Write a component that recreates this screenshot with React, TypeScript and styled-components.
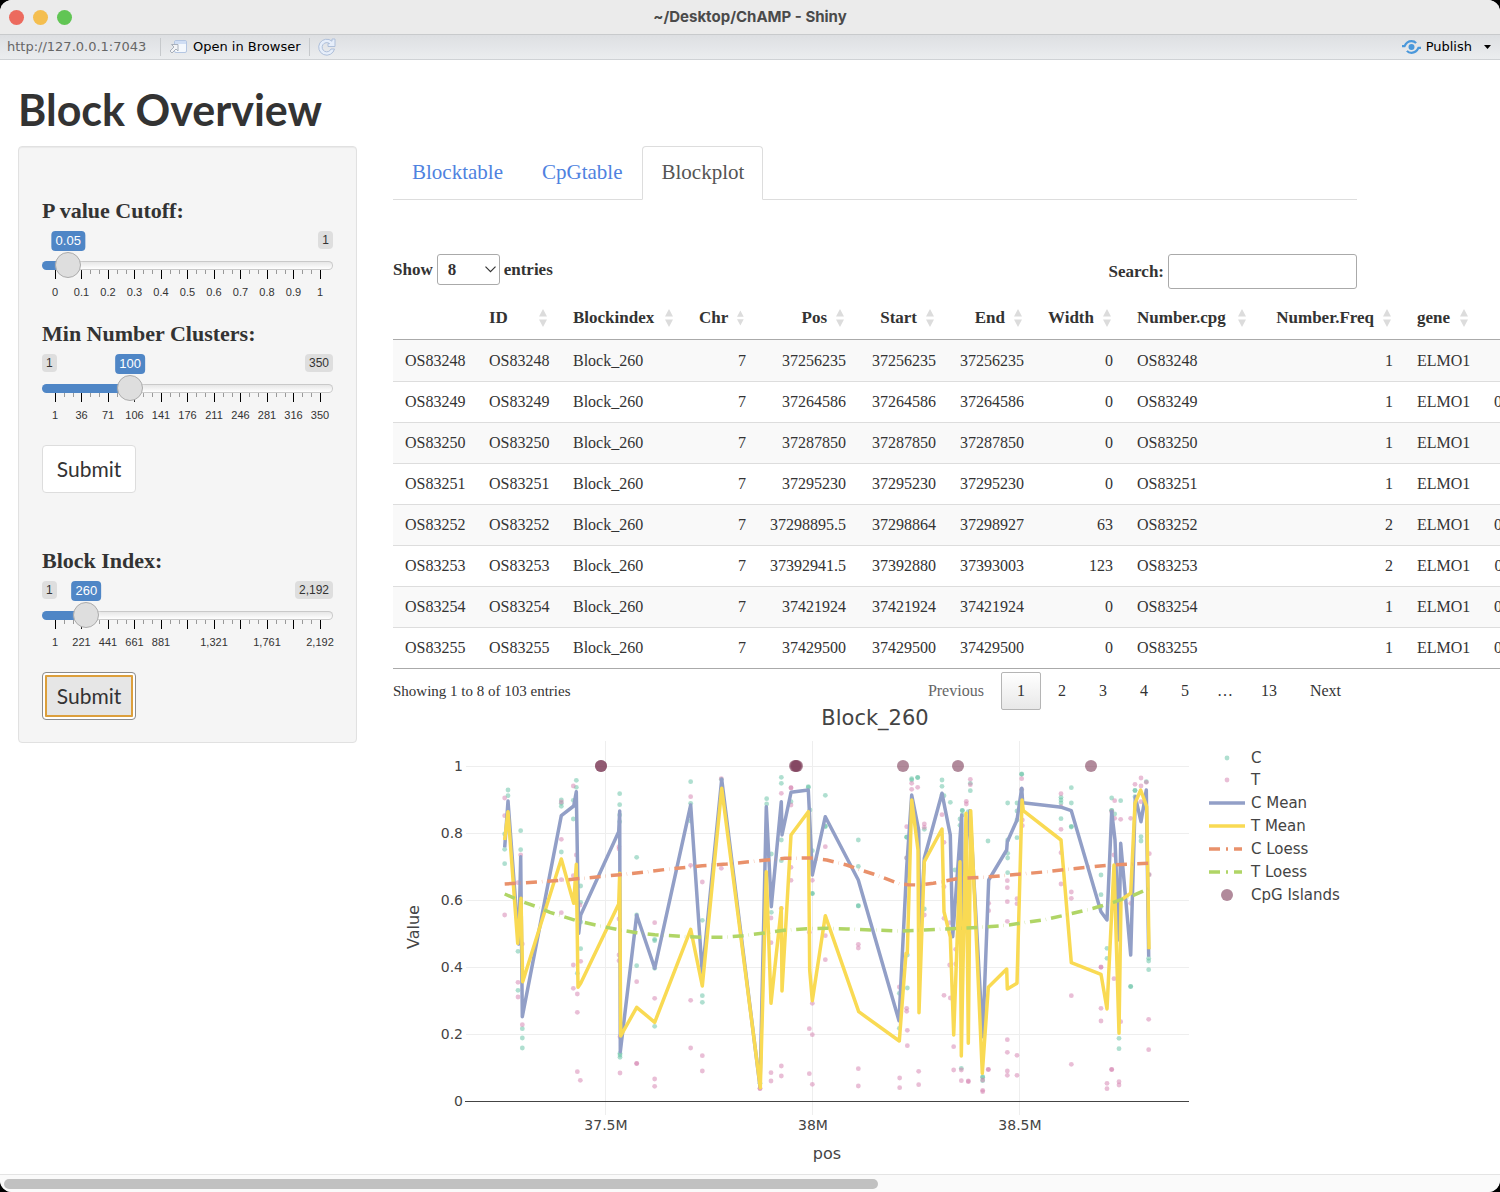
import React, { useId, useState } from "react";
import styled, { createGlobalStyle } from "styled-components";

const serif = '"Liberation Serif", "Times New Roman", serif';
const heading = 'Lato, "Open Sans", sans-serif';
const arial = '"Liberation Sans", Arial, sans-serif';
const ui = '"DejaVu Sans", Verdana, sans-serif';

const Global = createGlobalStyle`
  *, *::before, *::after { box-sizing: border-box; }
  html, body { margin: 0; background: #000; }
  body { font-family: ${serif}; color: #333; font-size: 16px; }
  button, input, select { font: inherit; color: inherit; }
`;

/* ---------- window frame ---------- */

const Window = styled.div`
  min-height: 100vh;
  display: flex;
  flex-direction: column;
  background: #fff;
  border-radius: 12px;
  overflow: hidden;
`;

const TitleBar = styled.header`
  display: grid;
  grid-template-columns: 1fr auto 1fr;
  align-items: center;
  height: 34px;
  padding: 0 9px;
  background: #ebebeb;
`;

const Lights = styled.div`
  display: flex;
  gap: 9px;
`;

const Light = styled.button<{ $color: string }>`
  width: 15px;
  height: 15px;
  padding: 0;
  border: 0;
  border-radius: 50%;
  background: ${(p) => p.$color};
`;

const WindowTitle = styled.div`
  font: 700 15px/20px Inter, sans-serif;
  color: #4a4a4a;
`;

const Toolbar = styled.nav`
  display: flex;
  align-items: center;
  height: 26px;
  padding: 0 9px 0 7px;
  border-top: 1px solid #c8cacc;
  border-bottom: 1px solid #cfd2d5;
  background: linear-gradient(#dddfe2, #ebedef);
  font: 13px/20px ${ui};
  color: #000;
`;

const Address = styled.span`
  min-width: 145px;
  color: #666;
`;

const Divider = styled.span`
  width: 1px;
  height: 18px;
  margin: 0 8px;
  background: #c6c9cc;
`;

const ToolButton = styled.button`
  display: flex;
  align-items: center;
  gap: 5px;
  padding: 0;
  border: 0;
  background: none;
`;

const ToolGroup = styled.span`
  display: flex;
  align-items: center;
  gap: 12px;
  margin-left: auto;
`;

const Content = styled.main`
  flex: 1;
  overflow: hidden;
`;

const ScrollTrack = styled.div`
  height: 18px;
  padding: 4px;
  border-top: 1px solid #e4e4e4;
  background: #fafafa;
`;

const ScrollThumb = styled.div`
  width: 58.6%;
  height: 10px;
  border-radius: 5px;
  background: #c1c1c1;
`;

/* ---------- page layout ---------- */

const PageTitle = styled.h1`
  margin: 0;
  padding: 27px 18px 13px;
  font: 700 43px/46px ${heading};
`;

const Columns = styled.div`
  display: grid;
  grid-template-columns: 3fr 8fr 1fr;
  align-items: start;
`;

const SideColumn = styled.aside`
  min-width: 0;
  padding: 0 18px;
`;

const MainColumn = styled.section`
  min-width: 0;
  padding: 0 18px;
`;

const Well = styled.form`
  padding: 50px 23px 22px;
  border: 1px solid #e1e1e1;
  border-radius: 4px;
  background: #f5f5f5;
  box-shadow: inset 0 1px 1px rgba(0, 0, 0, 0.05);
`;

/* ---------- sliders ---------- */

const Field = styled.div`
  margin-bottom: 20px;
`;

const FieldLabel = styled.label`
  display: block;
  margin-bottom: 6px;
  font-size: 22px;
  line-height: 28px;
  font-weight: 700;
`;

const Badges = styled.div`
  position: relative;
  display: flex;
  justify-content: space-between;
  align-items: flex-start;
  height: 30px;
  font-family: ${arial};
`;

const Limit = styled.span<{ $hidden?: boolean }>`
  visibility: ${(p) => (p.$hidden ? "hidden" : "visible")};
  padding: 0 4px;
  border-radius: 4px;
  background: #dedede;
  font-size: 12px;
  line-height: 18px;
`;

const Current = styled.output`
  position: absolute;
  top: 0;
  transform: translateX(-50%);
  padding: 0 4px;
  border-radius: 4px;
  background: #4f86c6;
  color: #fff;
  font-size: 13px;
  line-height: 20px;
`;

const Range = styled.input`
  appearance: none;
  position: relative;
  z-index: 1;
  display: block;
  width: 100%;
  height: 9px;
  margin: 0;
  border: 1px solid transparent;
  border-radius: 9px;
  outline: 0;

  &::-webkit-slider-runnable-track {
    height: 7px;
    margin: 0 -1px;
  }
  &::-webkit-slider-thumb {
    appearance: none;
    width: 26px;
    height: 26px;
    margin-top: -10px;
    border: 1px solid #ababab;
    border-radius: 50%;
    background: #dedede;
    box-shadow: 1px 1px 3px rgba(255, 255, 255, 0.3);
  }
`;

const Ticks = styled.div`
  display: flex;
  justify-content: space-between;
  height: 9px;
  padding: 0 12px 0 13px;
`;

const Tick = styled.span<{ $major: boolean }>`
  width: 1px;
  height: ${(p) => (p.$major ? 9 : 4)}px;
  background: ${(p) => (p.$major ? "#000" : "#999")};
`;

const Scale = styled.div`
  display: flex;
  justify-content: space-between;
  padding: 5px 13px 0;
  font: 11px/16px ${arial};
`;

const ScaleMark = styled.span`
  display: flex;
  justify-content: center;
  width: 0;
  height: 16px;
`;

interface SliderProps {
  label: string;
  min: number;
  max: number;
  step: number;
  initial: number;
  hideMin?: boolean;
  marks: string[];
}

function Slider({ label, min, max, step, initial, hideMin, marks }: SliderProps) {
  const id = useId();
  const [value, setValue] = useState(initial);
  const ratio = (value - min) / (max - min);
  const at = `calc(13px + (100% - 26px) * ${ratio})`;
  return (
    <Field>
      <FieldLabel htmlFor={id}>{label}</FieldLabel>
      <Badges>
        <Limit $hidden={hideMin}>{min}</Limit>
        <Limit>{max.toLocaleString("en-US")}</Limit>
        <Current htmlFor={id} style={{ left: at }}>
          {value.toLocaleString("en-US")}
        </Current>
      </Badges>
      <Range
        id={id}
        type="range"
        min={min}
        max={max}
        step={step}
        value={value}
        onChange={(e) => setValue(Number(e.target.value))}
        style={{
          background: `linear-gradient(to right, #4f86c6 ${at}, transparent ${at}) border-box, linear-gradient(#e6e6e6, #fff) padding-box, linear-gradient(#c9c9c9, #c9c9c9) border-box`,
        }}
      />
      <Ticks>
        {Array.from({ length: 31 }, (_, i) => (
          <Tick key={i} $major={i % 3 === 0} />
        ))}
      </Ticks>
      <Scale>
        {marks.map((m, i) => (
          <ScaleMark key={i}>{m}</ScaleMark>
        ))}
      </Scale>
    </Field>
  );
}

const Submit = styled.button<{ $pressed?: boolean }>`
  display: block;
  width: 94px;
  height: 48px;
  margin: 22px 0 0;
  padding: 0;
  border: 1px solid ${(p) => (p.$pressed ? "#8c8c8c" : "#ddd")};
  border-radius: 4px;
  outline: ${(p) => (p.$pressed ? "2px solid #dc9f3c" : "0")};
  outline-offset: -5px;
  background: ${(p) => (p.$pressed ? "#e6e6e6" : "#fff")};
  box-shadow: ${(p) => (p.$pressed ? "inset 0 0 0 2px #fff" : "none")};
  font: 21px/30px ${heading};
`;

const FieldGroup = styled.div`
  & + & {
    margin-top: 54px;
  }
`;

/* ---------- tabs ---------- */

const Tabs = styled.div`
  display: flex;
  gap: 1px;
  border-bottom: 1px solid #ddd;
`;

const Tab = styled.a<{ $active?: boolean }>`
  margin-bottom: -1px;
  padding: 10px 18px 11px;
  border: 1px solid ${(p) => (p.$active ? "#ddd" : "transparent")};
  border-bottom-color: ${(p) => (p.$active ? "#fff" : "transparent")};
  border-radius: 4px 4px 0 0;
  color: ${(p) => (p.$active ? "#555" : "#4f82e0")};
  font-size: 21px;
  line-height: 31px;
  text-decoration: none;
`;

/* ---------- data table ---------- */

const TableTools = styled.div`
  display: flex;
  justify-content: space-between;
  align-items: flex-start;
  margin: 54px 0 6px;
  font-size: 17px;
  font-weight: 700;
`;

const Inline = styled.label`
  display: flex;
  align-items: center;
  gap: 4px;
`;

const SelectBox = styled.span`
  position: relative;
  display: flex;
  svg {
    position: absolute;
    right: 4px;
    top: 12px;
    pointer-events: none;
  }
`;

const Select = styled.select`
  appearance: none;
  width: 63px;
  height: 31px;
  padding: 0 10px;
  border: 1px solid #aaa;
  border-radius: 3px;
  background: #fff;
`;

const SearchInput = styled.input`
  width: 189px;
  height: 35px;
  padding: 5px;
  border: 1px solid #aaa;
  border-radius: 3px;
  background: #fff;
`;

const Table = styled.table`
  table-layout: fixed;
  width: 1189px;
  border-collapse: separate;
  border-spacing: 0;
  border-bottom: 1px solid #aaa;
`;

const Th = styled.th`
  height: 45px;
  padding: 2px 14px 0 12px;
  border-bottom: 1px solid #aaa;
  font-size: 17px;
`;

const SortButton = styled.button<{ $right?: boolean }>`
  display: flex;
  align-items: center;
  justify-content: ${(p) => (p.$right ? "flex-end" : "space-between")};
  gap: 9px;
  width: 100%;
  padding: 0;
  border: 0;
  background: none;
  white-space: nowrap;
`;

const Tr = styled.tr`
  &:nth-child(odd) td {
    background: #f9f9f9;
  }
  & + & td {
    border-top: 1px solid #ddd;
  }
`;

const Td = styled.td<{ $right?: boolean }>`
  height: 41px;
  padding: 0 12px;
  line-height: 24px;
  text-align: ${(p) => (p.$right ? "right" : "left")};
  white-space: nowrap;
`;

const columns: { name: string; width: number; right?: boolean }[] = [
  { name: "", width: 84 },
  { name: "ID", width: 84 },
  { name: "Blockindex", width: 126 },
  { name: "Chr", width: 71, right: true },
  { name: "Pos", width: 100, right: true },
  { name: "Start", width: 90, right: true },
  { name: "End", width: 88, right: true },
  { name: "Width", width: 89, right: true },
  { name: "Number.cpg", width: 135 },
  { name: "Number.Freq", width: 145, right: true },
  { name: "gene", width: 77 },
  { name: "", width: 100, right: true },
];

const record = (id: string, pos: string, start: string, end: string, width: string, freq: string, value: string) => [
  id, id, "Block_260", "7", pos, start, end, width, id, freq, "ELMO1", value,
];

const rows = [
  record("OS83248", "37256235", "37256235", "37256235", "0", "1", ""),
  record("OS83249", "37264586", "37264586", "37264586", "0", "1", "0.87923415"),
  record("OS83250", "37287850", "37287850", "37287850", "0", "1", ""),
  record("OS83251", "37295230", "37295230", "37295230", "0", "1", ""),
  record("OS83252", "37298895.5", "37298864", "37298927", "63", "2", "0.35518264"),
  record("OS83253", "37392941.5", "37392880", "37393003", "123", "2", "0.72361108"),
  record("OS83254", "37421924", "37421924", "37421924", "0", "1", "0.58871920"),
  record("OS83255", "37429500", "37429500", "37429500", "0", "1", "0.70442315"),
];

const SortIcon = () => (
  <svg width="8" height="18" viewBox="0 0 8 18" fill="#dcdcdc" aria-hidden="true">
    <path d="M4 0 8 7.500H0zM0 10.500h8L4 18z" />
  </svg>
);

const TableFooter = styled.div`
  display: flex;
  justify-content: space-between;
  align-items: center;
  margin-top: 3px;
`;

const Info = styled.div`
  font-size: 15px;
  line-height: 20px;
`;

const Pager = styled.nav`
  display: flex;
  align-items: center;
  gap: 1px;
`;

const PageButton = styled.button<{ $current?: boolean }>`
  height: 38px;
  padding: 0 15px;
  border: 1px solid ${(p) => (p.$current ? "#b5b5b5" : "transparent")};
  border-radius: 2px;
  background: ${(p) => (p.$current ? "linear-gradient(#fff, #e8e8e8)" : "none")};

  &:disabled {
    color: #666;
  }
`;

const Ellipsis = styled.span`
  padding: 0 11px;
`;

/* ---------- block plot ---------- */

type Point = [number, number];

/* Points are kept in thirds of a pixel, measured from the left edge of their span. */
const span = (left: number, list: string): Point[] =>
  list
    .trim()
    .split(/\s+/)
    .map((pair) => {
      const [x, y] = pair.split(",").map(Number);
      return [left + x / 3, 740 + y / 3];
    });

const trace = (a: string, b: string, c: string): Point[] => [...span(390, a), ...span(660, b), ...span(880, c)];

const pathOf = (pts: Point[]) => pts.map(([x, y]) => `${x.toFixed(1)},${y.toFixed(1)}`).join(" ");

const cMean = trace(
  "344,322 354,183 386,612 392,350 397,830 514,227 551,198 559,155 566,580 572,525 686,275 689,213 691,935 740,525 794,685",
  "92,195 127,700 185,118 300,1040 319,200 334,500 364,185 366,285 393,157 445,150 448,210 457,405 496,230 595,420 717,842",
  "80,382 95,165 116,270 119,600 133,355 186,160 211,285 218,590 245,225 247,600 260,300 270,212 308,890 326,420 380,330 382,305 411,240 425,145 428,188 545,202 574,212 663,515 681,540 695,215 705,300 717,600 722,310 752,645 766,170 783,245 799,150 806,650"
);

const tMean = trace(
  "344,300 354,215 383,610 393,475 398,725 514,357 551,490 559,373 564,742 572,730 686,492 689,400 692,888 740,802 794,847",
  "92,568 127,738 185,145 301,1043 319,395 333,790 364,503 366,753 393,285 445,215 449,690 457,782 496,527 596,815 718,903",
  "78,640 82,640 95,180 114,330 117,818 133,365 186,267 192,515 211,590 221,885 240,365 244,948 258,220 265,910 272,212 307,1000 325,742 380,687 382,747 411,730 426,180 430,212 543,300 574,668 663,703 681,807 702,375 717,880 723,480 752,460 765,190 782,150 800,200 807,628"
);

const cLoess = trace(
  "344,432 440,426 514,421 620,411 690,404 760,397 830,388",
  "60,384 127,377 200,372 270,365 320,360 375,355 450,354 500,360 560,375 595,388 640,402 718,431",
  "85,434 120,435 160,430 190,424 230,416 320,411 425,402 500,395 570,387 660,378 700,375 770,371 806,370"
);

const tLoess = trace(
  "344,462 392,483 440,500 480,517 560,542 620,556 690,570 740,578 794,584",
  "60,589 130,592 190,592 250,587 320,578 380,570 440,566 500,565 560,567 640,570 720,573",
  "120,571 200,567 300,562 380,556 425,549 500,538 570,522 640,505 700,487 760,466 806,446"
);

const cDots = trace(
  "354,150 354,167 344,282 344,328 344,371 392,272 392,329 384,634 384,751 397,866 397,894 397,924 514,180 514,190 514,199 514,336 550,181 550,237 559,121 559,142 572,438 572,487 572,546 572,626 562,700 689,161 689,194 689,225 689,245 740,352 740,525 740,677 794,602 794,598 794,685 794,859 690,940 690,952 690,945",
  "92,125 92,190 92,243 127,541 127,767 127,787 184,118 320,176 320,192 334,342 334,517 364,112 364,130 364,300 364,362 393,185 445,140 445,142 450,210 457,332 457,460 457,461 496,166 496,258 496,260 595,300 595,379 595,498 595,497 718,760 718,865 300,1030",
  "80,291 80,292 95,116 95,120 113,112 113,113 80,354 133,268 133,507 82,645 82,744 186,120 186,139 192,167 211,187 186,165 240,237 240,256 225,390 247,211 247,212 247,225 271,152 271,130 265,215 324,303 383,189 383,300 383,340 383,354 383,398 411,189 411,213 411,240 411,293 425,102 425,103 425,150 543,172 543,180 543,189 543,236 574,143 574,189 574,261 574,259 663,405 663,464 681,625 681,655 663,500 695,174 695,211 695,212 704,222 722,182 765,151 765,152 765,170 783,290 783,303 799,125 806,404 806,655 806,663 806,689 752,739 752,740 717,895 717,926 244,985 308,1010 308,1012 308,1022"
);

const tDots = trace(
  "344,174 344,227 344,525 392,345 384,428 384,727 384,771 397,612 397,854 514,186 514,298 514,419 514,518 550,138 550,407 550,675 550,745 559,345 562,490 570,495 572,664 562,762 562,817 562,995 571,1021 687,320 687,327 687,537 687,645 687,662 690,890 690,999 740,725 740,970 740,971 794,548 794,775 794,1017 794,1039",
  "92,170 92,376 92,781 92,924 127,426 127,947 127,993 184,385 184,116 300,1046 300,1045 333,534 333,608 333,998 333,1023 364,160 364,505 364,978 364,1008 393,143 393,144 393,195 393,382 393,421 448,280 457,421 448,577 457,790 448,866 457,884 448,1001 457,1033 496,320 496,587 496,659 595,613 595,624 595,986 595,1038 718,741",
  "80,260 80,354 95,130 95,148 113,142 133,252 133,262 133,525 80,805 80,814 82,871 82,917 59,1014 59,1043 116,994 116,1034 186,224 192,307 192,440 192,535 192,766 209,548 211,774 209,675 221,990 221,920 227,628 227,672 244,990 244,1022 259,184 259,192 271,118 271,134 265,1023 265,1025 308,1020 308,1051 308,1055 325,988 325,989 326,490 326,512 382,422 382,443 382,485 382,544 382,899 382,937 382,993 382,1006 411,476 411,491 411,946 411,1006 425,116 425,148 427,240 427,257 543,161 543,200 543,268 543,338 543,432 574,456 574,475 574,767 574,973 663,682 663,681 663,805 663,843 681,1030 681,1046 695,215 695,988 695,989 704,182 704,235 702,345 702,716 722,238 722,845 717,1025 717,1035 752,235 752,490 765,133 783,114 783,138 783,185 799,127 808,341 808,404 806,838 806,929"
);

const islands = [601, 601, 795, 796, 797, 903, 958, 1091];

const color = {
  c: "#66c2a5",
  t: "#d583b0",
  cMean: "#929fc7",
  tMean: "#f9da53",
  cLoess: "#e9916b",
  tLoess: "#b0d566",
  island: "#7d3c58",
};

const Plot = styled.svg`
  display: block;
  width: 100%;
  height: auto;
  overflow: visible;
  font-family: ${ui};
  font-size: 14px;
  fill: #444;
`;

const Line = styled.polyline<{ $color: string; $dashed?: boolean }>`
  fill: none;
  stroke: ${(p) => p.$color};
  stroke-width: 3.5px;
  stroke-linejoin: round;
  stroke-dasharray: ${(p) => (p.$dashed ? "11 5 0.3 5" : "none")};
`;

const LegendDash = styled(Line)`
  stroke-dasharray: 11 6 2 6;
`;

const Dot = styled.circle<{ $color: string }>`
  fill: ${(p) => p.$color};
  opacity: 0.52;
`;

const Island = styled.circle`
  fill: ${color.island};
  opacity: 0.6;
`;

const PlotTitle = styled.text`
  font-size: 21px;
  text-anchor: middle;
`;

const AxisTitle = styled.text`
  font-size: 16px;
  text-anchor: middle;
`;

const LegendText = styled.text`
  font-size: 15px;
`;

const legend = ["C", "T", "C Mean", "T Mean", "C Loess", "T Loess", "CpG Islands"];
const legendY = [758, 780, 803, 826, 849, 872, 895];

function BlockPlot() {
  return (
    <Plot viewBox="393 710 964 462" role="img" aria-label="Block_260 methylation values by position">
      <PlotTitle x="875" y="725">Block_260</PlotTitle>
      <g stroke="#eee">
        {[766, 833, 900, 967, 1034].map((y) => (
          <line key={y} x1="466" x2="1189" y1={y + 0.5} y2={y + 0.5} />
        ))}
        {[605, 812, 1019].map((x) => (
          <line key={x} x1={x + 0.5} x2={x + 0.5} y1="741" y2="1115" />
        ))}
      </g>
      {cDots.map(([x, y], i) => (
        <Dot key={i} cx={x} cy={y} r="2.4" $color={color.c} />
      ))}
      {tDots.map(([x, y], i) => (
        <Dot key={i} cx={x} cy={y} r="2.4" $color={color.t} />
      ))}
      <Line $color={color.cMean} points={pathOf(cMean)} />
      <Line $color={color.tMean} points={pathOf(tMean)} />
      <Line $color={color.cLoess} $dashed points={pathOf(cLoess)} />
      <Line $color={color.tLoess} $dashed points={pathOf(tLoess)} />
      {islands.map((x, i) => (
        <Island key={i} cx={x} cy="766" r="6" />
      ))}
      <line x1="465" x2="1189" y1="1101.5" y2="1101.5" stroke="#444" />
      <g textAnchor="end">
        {["1", "0.8", "0.6", "0.4", "0.2", "0"].map((t, i) => (
          <text key={t} x="463" y={771 + i * 67}>{t}</text>
        ))}
      </g>
      <g textAnchor="middle">
        {["37.5M", "38M", "38.5M"].map((t, i) => (
          <text key={t} x={606 + i * 207} y="1130">{t}</text>
        ))}
      </g>
      <AxisTitle x="827" y="1159">pos</AxisTitle>
      <AxisTitle transform="translate(419 927) rotate(-90)">Value</AxisTitle>
      <Dot cx="1227" cy="758" r="2.4" $color={color.c} />
      <Dot cx="1227" cy="780" r="2.4" $color={color.t} />
      <Line $color={color.cMean} points="1209,803 1245,803" />
      <Line $color={color.tMean} points="1209,826 1245,826" />
      <LegendDash $color={color.cLoess} points="1209,849 1242,849" />
      <LegendDash $color={color.tLoess} points="1209,872 1242,872" />
      <Island cx="1227" cy="895" r="6" />
      {legend.map((name, i) => (
        <LegendText key={name} x="1251" y={legendY[i] + 5}>{name}</LegendText>
      ))}
    </Plot>
  );
}

/* ---------- toolbar icons ---------- */

const OpenIcon = () => (
  <svg width="19" height="16" viewBox="0 0 19 16" aria-hidden="true">
    <rect x="5.5" y="1.5" width="12" height="12" rx="1.5" fill="#f4f8fd" stroke="#b4c6e2" />
    <path d="M6 2h11v3H6z" fill="#d0def4" />
    <path d="M2.500 5.500H9V12L7 10l-4 4-2-2 4-4z" fill="#f3f4f6" stroke="#a9b0ba" />
  </svg>
);

const ReloadIcon = () => (
  <svg width="18" height="18" viewBox="0 0 18 18" aria-hidden="true">
    <path
      d="M14 3.200V1h3v7.500H10V5.600h1.600A4.600 4.600 0 1 0 13 11h3.500A8 8 0 1 1 14 3.200z"
      fill="#e6eefa"
      stroke="#aebfda"
    />
  </svg>
);

const PublishIcon = () => (
  <svg width="19" height="14" viewBox="0 0 19 14" fill="none" stroke="#4a98db" strokeWidth="2.200" aria-hidden="true">
    <circle cx="9.500" cy="7" r="3" fill="#4a98db" stroke="none" />
    <path d="M0 6.200h2.500C4 3 6.500 1.200 9.500 1.200c2 0 3.500.6 4.600 1.900" />
    <path d="M19 7.800h-2.500C15 11 12.500 12.800 9.500 12.800c-2 0-3.500-.6-4.600-1.900" />
  </svg>
);

export default function App() {
  return (
    <>
      <Global />
      <Window>
        <TitleBar>
          <Lights>
            <Light $color="#ec6a5e" aria-label="Close" />
            <Light $color="#f4be4f" aria-label="Minimize" />
            <Light $color="#61c554" aria-label="Zoom" />
          </Lights>
          <WindowTitle>~/Desktop/ChAMP - Shiny</WindowTitle>
        </TitleBar>
        <Toolbar>
          <Address>http://127.0.0.1:7043</Address>
          <Divider />
          <ToolButton>
            <OpenIcon />
            Open in Browser
          </ToolButton>
          <Divider />
          <ToolButton aria-label="Reload">
            <ReloadIcon />
          </ToolButton>
          <ToolGroup>
            <ToolButton>
              <PublishIcon />
              Publish
            </ToolButton>
            <ToolButton aria-label="Publish options">
              <svg width="7" height="4" viewBox="0 0 7 4" aria-hidden="true">
                <path d="M0 0h7L3.500 4z" fill="#000" />
              </svg>
            </ToolButton>
          </ToolGroup>
        </Toolbar>

        <Content>
          <PageTitle>Block Overview</PageTitle>
          <Columns>
            <SideColumn>
              <Well onSubmit={(e) => e.preventDefault()}>
                <FieldGroup>
                  <Slider
                    label="P value Cutoff:"
                    min={0}
                    max={1}
                    step={0.01}
                    initial={0.05}
                    hideMin
                    marks={["0", "0.1", "0.2", "0.3", "0.4", "0.5", "0.6", "0.7", "0.8", "0.9", "1"]}
                  />
                  <Slider
                    label="Min Number Clusters:"
                    min={1}
                    max={350}
                    step={1}
                    initial={100}
                    marks={["1", "36", "71", "106", "141", "176", "211", "246", "281", "316", "350"]}
                  />
                  <Submit>Submit</Submit>
                </FieldGroup>
                <FieldGroup>
                  <Slider
                    label="Block Index:"
                    min={1}
                    max={2192}
                    step={1}
                    initial={260}
                    marks={["1", "221", "441", "661", "881", "", "1,321", "", "1,761", "", "2,192"]}
                  />
                  <Submit $pressed>Submit</Submit>
                </FieldGroup>
              </Well>
            </SideColumn>

            <MainColumn>
              <Tabs>
                <Tab href="#blocktable">Blocktable</Tab>
                <Tab href="#cpgtable">CpGtable</Tab>
                <Tab href="#blockplot" $active aria-current="page">Blockplot</Tab>
              </Tabs>

              <TableTools>
                <Inline>
                  Show
                  <SelectBox>
                    <Select defaultValue="8">
                      <option>8</option>
                      <option>25</option>
                      <option>50</option>
                    </Select>
                    <svg width="11" height="7" viewBox="0 0 11 7" fill="none" stroke="#333" strokeWidth="1.200" aria-hidden="true">
                      <path d="M.5.7l5 5 5-5" />
                    </svg>
                  </SelectBox>
                  entries
                </Inline>
                <Inline>
                  Search:
                  <SearchInput type="search" />
                </Inline>
              </TableTools>

              <Table>
                <colgroup>
                  {columns.map((c, i) => (
                    <col key={i} style={{ width: c.width }} />
                  ))}
                </colgroup>
                <thead>
                  <tr>
                    {columns.map((c, i) => (
                      <Th key={i} scope="col">
                        {c.name && (
                          <SortButton $right={c.right}>
                            {c.name}
                            <SortIcon />
                          </SortButton>
                        )}
                      </Th>
                    ))}
                  </tr>
                </thead>
                <tbody>
                  {rows.map((r) => (
                    <Tr key={r[0]}>
                      {r.map((cell, i) => (
                        <Td key={i} $right={columns[i].right}>{cell}</Td>
                      ))}
                    </Tr>
                  ))}
                </tbody>
              </Table>

              <TableFooter>
                <Info>Showing 1 to 8 of 103 entries</Info>
                <Pager aria-label="Table pages">
                  <PageButton disabled>Previous</PageButton>
                  <PageButton $current>1</PageButton>
                  <PageButton>2</PageButton>
                  <PageButton>3</PageButton>
                  <PageButton>4</PageButton>
                  <PageButton>5</PageButton>
                  <Ellipsis>…</Ellipsis>
                  <PageButton>13</PageButton>
                  <PageButton>Next</PageButton>
                </Pager>
              </TableFooter>

              <BlockPlot />
            </MainColumn>
          </Columns>
        </Content>

        <ScrollTrack>
          <ScrollThumb />
        </ScrollTrack>
      </Window>
    </>
  );
}
